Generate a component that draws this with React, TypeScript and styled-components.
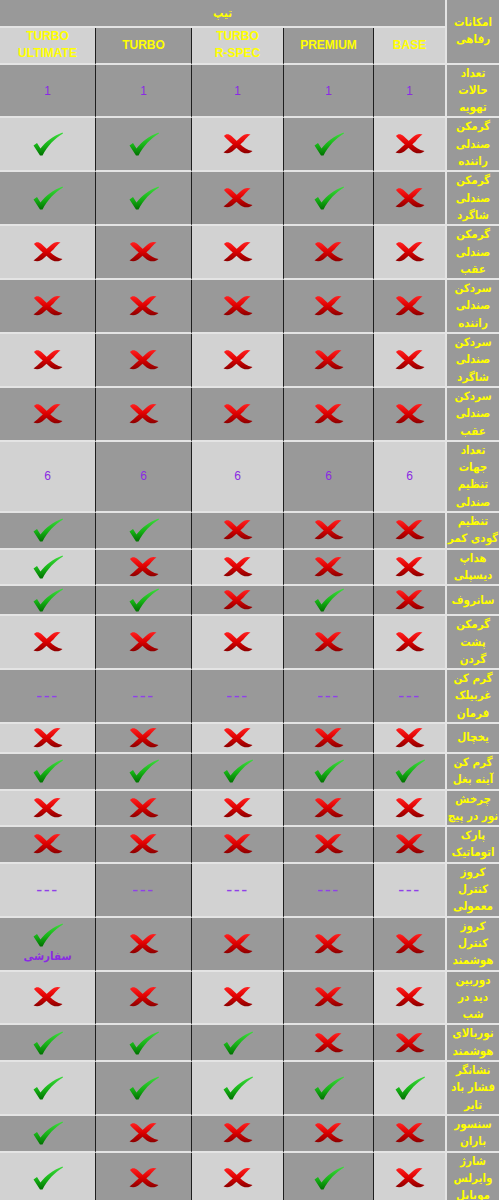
import React from "react";
import styled, { createGlobalStyle } from "styled-components";

const GRAY = "#999999";
const LIGHT = "#d2d2d2";
const RULE = "#e4e4e4";
const YELLOW = "#ffff00";
const PURPLE = "#8a2be2";

const GlobalStyle = createGlobalStyle`
  * {
    box-sizing: border-box;
  }
  body {
    margin: 0;
    background: #fff;
    font-family: "Liberation Sans", Arial, sans-serif;
  }
`;

const Table = styled.div`
  direction: rtl;
  width: 499px;
  display: grid;
  grid-template-columns: 54px 71px 90px 92px 96px 96px;
`;

const Feature = styled.div<{ $span?: number }>`
  grid-row: span ${(p) => p.$span ?? 1};
  display: flex;
  flex-direction: column;
  align-items: center;
  justify-content: center;
  background: ${GRAY};
  border-bottom: 2px solid ${RULE};
  border-left: 2px solid ${RULE};
  color: ${YELLOW};
  font: bold 11.5px/17.3px "DejaVu Sans", sans-serif;
  font-stretch: condensed;
  white-space: nowrap;
  text-align: center;
`;

const Line = styled.span`
  display: block;
`;

const TypeHead = styled.div`
  grid-column: span 5;
  height: 28px;
  display: flex;
  align-items: center;
  justify-content: center;
  background: ${GRAY};
  border-bottom: 2px solid ${RULE};
  color: ${YELLOW};
  font: bold 11.5px "DejaVu Sans", sans-serif;
  font-stretch: condensed;
`;

const Cell = styled.div<{ $light?: boolean; $divider?: boolean }>`
  display: flex;
  flex-direction: column;
  align-items: center;
  justify-content: center;
  min-height: 30px;
  background: ${(p) => (p.$light ? LIGHT : GRAY)};
  border-bottom: 2px solid ${RULE};
  border-right: ${(p) => (p.$divider ? "1px solid #1e1e1e" : "none")};
`;

const ModelName = styled.div`
  direction: ltr;
  color: ${YELLOW};
  font: bold 12px/17.3px "Liberation Sans", Arial, sans-serif;
  text-align: center;
`;

const Num = styled.span`
  color: ${PURPLE};
  font: 12px "Liberation Sans", Arial, sans-serif;
`;

const Dash = styled.span`
  color: #9040e8;
  font: 18px/18px "Liberation Sans", Arial, sans-serif;
  letter-spacing: 1.5px;
  direction: ltr;
`;

const Custom = styled.span`
  margin-top: 1px;
  color: ${PURPLE};
  font: bold 11.5px/16px "DejaVu Sans", sans-serif;
  font-stretch: condensed;
`;

const Check = () => (
  <svg width="30" height="24" viewBox="0 0 30 24">
    <defs>
      <linearGradient id="chk" x1="0" y1="0" x2="0" y2="1">
        <stop offset="0" stopColor="#3ddc3d" />
        <stop offset="0.55" stopColor="#16b316" />
        <stop offset="1" stopColor="#007000" />
      </linearGradient>
    </defs>
    <path
      d="M0.5 13.5 L4 11 L7.5 16.5 C13 9.5 20 4 29.5 0.5 L30 1.5 C21.5 6.5 14.5 14 9.5 23.5 L7 23.5 Z"
      fill="url(#chk)"
    />
  </svg>
);

const Cross = () => (
  <svg width="30" height="22" viewBox="0 0 30 22">
    <defs>
      <linearGradient id="crs" x1="0" y1="0" x2="0" y2="1">
        <stop offset="0" stopColor="#ff2020" />
        <stop offset="0.5" stopColor="#dd0000" />
        <stop offset="1" stopColor="#8a0000" />
      </linearGradient>
    </defs>
    <path
      d="M1 3 C3 0.5 6 1 8.5 3 L17 11 C20 14 24 17 29.5 18 C26 21.5 20 21 16 17 L7.5 9.5 C5 7 3 5.5 1 3 Z"
      fill="url(#crs)"
    />
    <path
      d="M27.5 1.5 C24 0 21 1.5 18 4 L8 13 C5.5 15.5 3 17.5 0.5 19.5 C5 21.5 8.5 19.5 11 17 L20.5 8.5 C23 5.5 25 3 27.5 1.5 Z"
      fill="url(#crs)"
    />
  </svg>
);

// columns in rtl order: BASE, PREMIUM, TURBO R-SPEC, TURBO, TURBO ULTIMATE
const MODELS = [["BASE"], ["PREMIUM"], ["TURBO", "R-SPEC"], ["TURBO"], ["TURBO", "ULTIMATE"]];

// y = check, n = cross, c = check + سفارشی, other text shown as is
const ROWS: { name: string[]; values: string[] }[] = [
  { name: ["تعداد", "حالات", "تهویه"], values: ["1", "1", "1", "1", "1"] },
  { name: ["گرمکن", "صندلی", "راننده"], values: ["n", "y", "n", "y", "y"] },
  { name: ["گرمکن", "صندلی", "شاگرد"], values: ["n", "y", "n", "y", "y"] },
  { name: ["گرمکن", "صندلی", "عقب"], values: ["n", "n", "n", "n", "n"] },
  { name: ["سردکن", "صندلی", "راننده"], values: ["n", "n", "n", "n", "n"] },
  { name: ["سردکن", "صندلی", "شاگرد"], values: ["n", "n", "n", "n", "n"] },
  { name: ["سردکن", "صندلی", "عقب"], values: ["n", "n", "n", "n", "n"] },
  { name: ["تعداد", "جهات", "تنظیم", "صندلی"], values: ["6", "6", "6", "6", "6"] },
  { name: ["تنظیم", "گودی کمر"], values: ["n", "n", "n", "y", "y"] },
  { name: ["هداپ", "دیسپلی"], values: ["n", "n", "n", "n", "y"] },
  { name: ["سانروف"], values: ["n", "y", "n", "y", "y"] },
  { name: ["گرمکن", "پشت", "گردن"], values: ["n", "n", "n", "n", "n"] },
  { name: ["گرم کن", "غربیلک", "فرمان"], values: ["---", "---", "---", "---", "---"] },
  { name: ["یخچال"], values: ["n", "n", "n", "n", "n"] },
  { name: ["گرم کن", "آینه بغل"], values: ["y", "y", "y", "y", "y"] },
  { name: ["چرخش", "نور در پیچ"], values: ["n", "n", "n", "n", "n"] },
  { name: ["پارک", "اتوماتیک"], values: ["n", "n", "n", "n", "n"] },
  { name: ["کروز", "کنترل", "معمولی"], values: ["---", "---", "---", "---", "---"] },
  { name: ["کروز", "کنترل", "هوشمند"], values: ["n", "n", "n", "n", "c"] },
  { name: ["دوربین", "دید در", "شب"], values: ["n", "n", "n", "n", "n"] },
  { name: ["نوربالای", "هوشمند"], values: ["n", "n", "y", "y", "y"] },
  { name: ["نشانگر", "فشار باد", "تایر"], values: ["y", "y", "y", "y", "y"] },
  { name: ["سنسور", "باران"], values: ["n", "n", "n", "n", "y"] },
  { name: ["شارژ", "وایرلس", "موبایل"], values: ["n", "y", "n", "n", "y"] },
];

const renderValue = (v: string) => {
  if (v === "y") return <Check />;
  if (v === "n") return <Cross />;
  if (v === "c")
    return (
      <>
        <Check />
        <Custom>سفارشی</Custom>
      </>
    );
  if (v === "---") return <Dash>---</Dash>;
  return <Num>{v}</Num>;
};

export default function App() {
  return (
    <>
      <GlobalStyle />
      <Table>
        <Feature $span={2}>
          <Line>امکانات</Line>
          <Line>رفاهی</Line>
        </Feature>
        <TypeHead>تیپ</TypeHead>
        {MODELS.map((m, i) => (
          <Cell key={m.join(" ")} $light={i % 2 === 0} $divider={i > 0}>
            <ModelName>
              {m.map((l) => (
                <Line key={l}>{l}</Line>
              ))}
            </ModelName>
          </Cell>
        ))}
        {ROWS.map((row, r) => (
          <React.Fragment key={r}>
            <Feature>
              {row.name.map((l) => (
                <Line key={l}>{l}</Line>
              ))}
            </Feature>
            {row.values.map((v, i) => (
              <Cell key={i} $light={r % 2 === 1 && i % 2 === 0} $divider={i > 0}>
                {renderValue(v)}
              </Cell>
            ))}
          </React.Fragment>
        ))}
      </Table>
    </>
  );
}
